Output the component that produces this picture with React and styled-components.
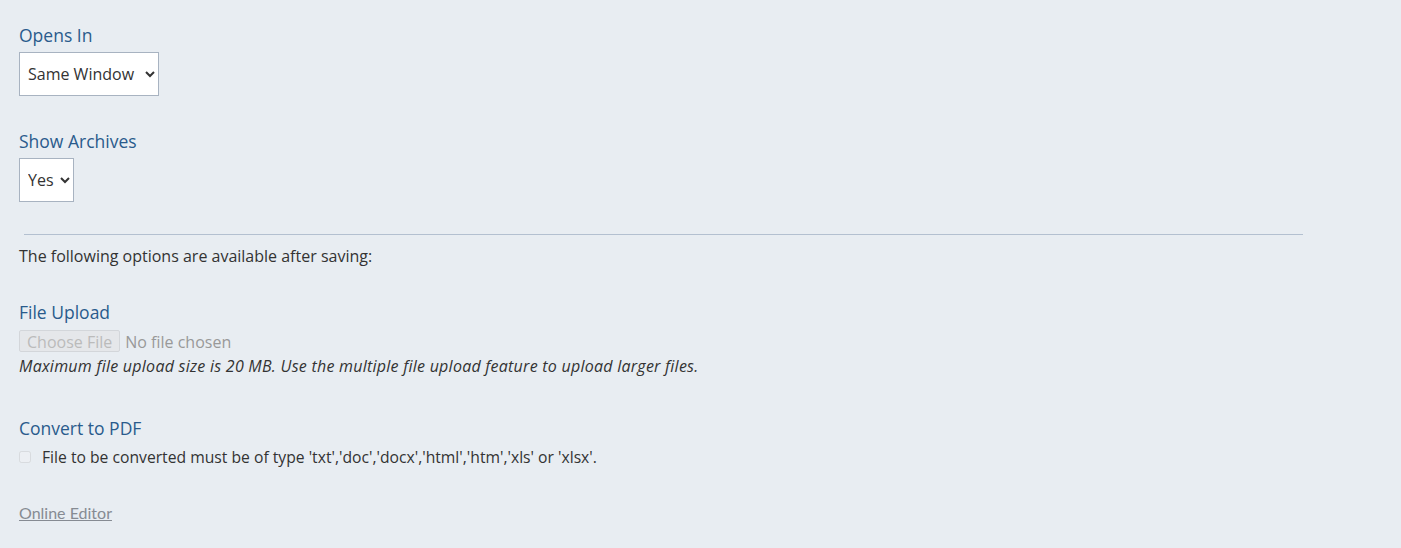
import React from "react";
import styled, { createGlobalStyle } from "styled-components";

const Global = createGlobalStyle`
  body {
    margin: 0;
    background: #e8edf2;
    font-family: "Open Sans", "Lato", sans-serif;
    color: #333;
  }
`;

const Wrap = styled.div`
  padding: 24px 19px 20px;
  background: #e8edf2;
  min-height: 548px;
  box-sizing: border-box;
`;

const Label = styled.label`
  display: block;
  font-size: 17.5px;
  line-height: 22px;
  color: #2a5b8c;
  margin-top: ${(p) => p.$top || 0}px;
  margin-bottom: ${(p) => (p.$bottom || 4) + 2}px;
`;

const Select = styled.select`
  display: block;
  height: 44px;
  width: ${(p) => p.$w}px;
  padding: 0 2px 0 4px;
  font-family: inherit;
  font-size: 16px;
  color: #333;
  background: #fff;
  border: 1px solid #a8b3c1;
  border-radius: 0;
`;

const Rule = styled.hr`
  width: 1279px;
  margin: 32px 0 11px 5px;
  border: 0;
  border-top: 1px solid #b3c0d0;
`;

const Note = styled.div`
  font-size: 16px;
  line-height: 20px;
  color: #333;
  font-style: ${(p) => (p.$italic ? "italic" : "normal")};
  letter-spacing: ${(p) => (p.$italic ? "0.25px" : "0")};
  margin-top: ${(p) => p.$top || 0}px;
`;

const FileInput = styled.input`
  display: block;
  height: 22px;
  font-family: inherit;
  font-size: 16px;
  color: #999;
  &::file-selector-button {
    font-family: inherit;
    font-size: 16px;
    color: #bbb;
    background: #e5e7ea;
    border: 1px solid #d3d6da;
    border-radius: 2px;
    padding: 0 7px;
    height: 22px;
    margin-right: 5px;
  }
`;

const CheckRow = styled.div`
  display: flex;
  align-items: center;
  gap: 11px;
  font-size: 15.7px;
  line-height: 20px;
  color: #333;
`;

const Check = styled.input`
  margin: 0;
  width: 12px;
  height: 12px;
  opacity: 0.5;
`;

const Link = styled.a`
  display: inline-block;
  margin-top: 36px;
  font-family: "Lato", sans-serif;
  font-weight: 400;
  font-size: 16px;
  line-height: 20px;
  color: #868b93;
  text-decoration: underline;
`;

export default function App() {
  return (
    <>
      <Global />
      <Wrap>
        <Label>Opens In</Label>
        <Select $w={140} defaultValue="same">
          <option value="same">Same Window</option>
          <option value="new">New Window</option>
        </Select>

        <Label $top={34} $bottom={4}>Show Archives</Label>
        <Select $w={55} defaultValue="yes">
          <option value="yes">Yes</option>
          <option value="no">No</option>
        </Select>

        <Rule />
        <Note>The following options are available after saving:</Note>

        <Label $top={35} $bottom={5}>File Upload</Label>
        <FileInput type="file" disabled />
        <Note $italic $top={4}>
          Maximum file upload size is 20 MB. Use the multiple file upload feature to upload larger files.
        </Note>

        <Label $top={41} $bottom={6}>Convert to PDF</Label>
        <CheckRow>
          <Check type="checkbox" disabled />
          File to be converted must be of type 'txt','doc','docx','html','htm','xls' or 'xlsx'.
        </CheckRow>

        <Link href="#">Online Editor</Link>
      </Wrap>
    </>
  );
}
